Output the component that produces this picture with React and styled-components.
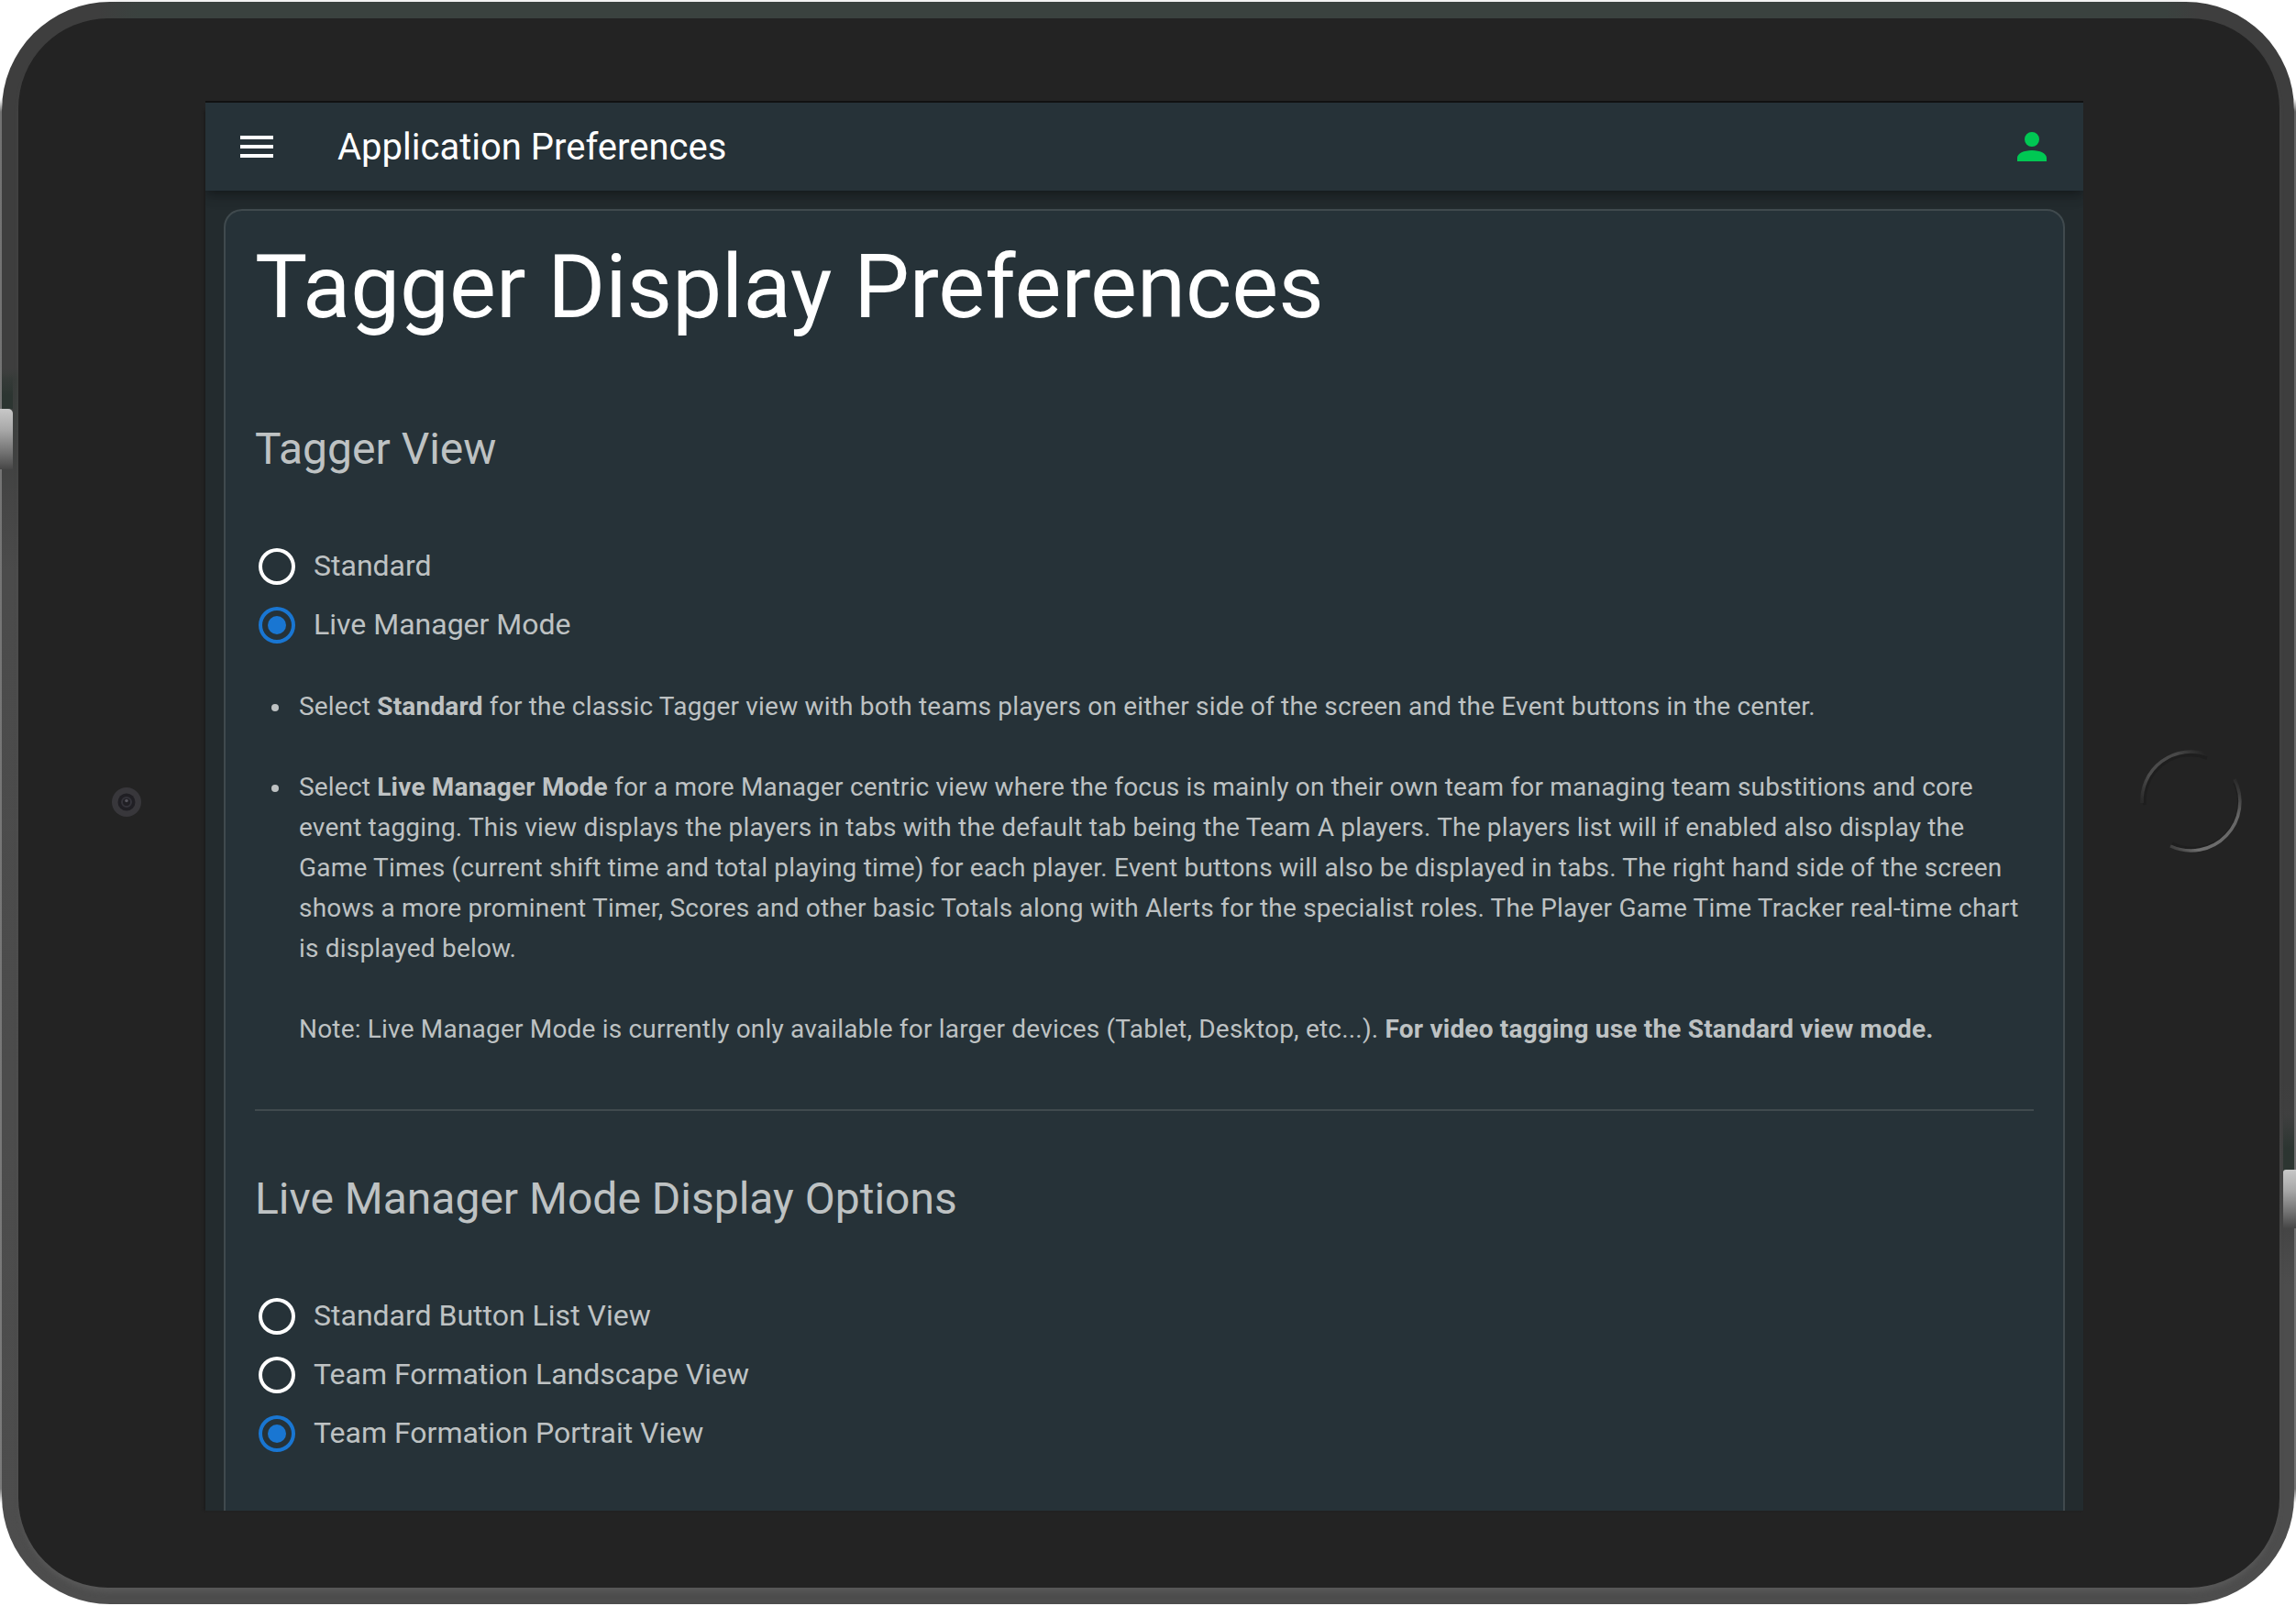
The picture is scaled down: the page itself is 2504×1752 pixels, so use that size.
import React from "react";
import styled, { createGlobalStyle, css } from "styled-components";

const Global = createGlobalStyle`
  *, *::before, *::after { box-sizing: border-box; }
  body { margin: 0; background: #fff; font-family: Roboto, "Liberation Sans", sans-serif; }
`;

const Device = styled.div`
  position: relative;
  width: 2504px;
  height: 1752px;
  padding: 2px;
  overflow: hidden;
  background:
    linear-gradient(to bottom, transparent 108px, #727272 122px, #7a7a7a 1624px, transparent 1640px) left / 2px 100% no-repeat,
    linear-gradient(to bottom, transparent 108px, #626262 122px, #727272 1624px, transparent 1640px) right / 2px 100% no-repeat,
    linear-gradient(to right, transparent 110px, #f3f3f3 130px, #f3f3f3 2374px, transparent 2394px) top / 100% 2px no-repeat,
    #fff;
`;

const Rim = styled.div`
  width: 2500px;
  height: 1748px;
  padding: 18px 16px 18px 18px;
  border-radius: 118px;
  background:
    linear-gradient(to right, transparent 105px, #3a423f 150px, #3a423f 2360px, transparent 2395px) top / 100% 18px no-repeat,
    linear-gradient(to bottom, #3e3e3e 400px, #383c3a 412px, #454545 540px, #4b4b4b 620px, #4d4d4d) left / 50% 100% no-repeat,
    linear-gradient(to bottom, #3e3e3e 1180px, #454545 1340px, #4d4d4d 1400px) right / 50% 100% no-repeat;
`;

const Bezel = styled.div`
  display: grid;
  grid-template-columns: 204px 2048px 214px;
  height: 1712px;
  padding: 92px 0 84px;
  border-radius: 98px;
  background: #232323;
  box-shadow: 0 7px 6px -3px #5a5a5a;
`;

const BezelSide = styled.div`
  display: flex;
  align-items: center;
  padding: ${(p) => p.$pad};
`;

const SideButton = styled.div`
  position: absolute;
  width: 14px;
  height: ${(p) => p.$height};
  top: ${(p) => p.$top};
  ${(p) =>
    p.$right
      ? css`
          right: 0;
          border-radius: 3px 0 0 0;
        `
      : css`
          left: 0;
          border-radius: 0 5px 0 0;
        `}
  background: linear-gradient(to bottom, #c8c8c8, #a8a8a8 35%, #6e6e6e 75%, #464646);
`;

const ButtonShade = styled.div`
  position: absolute;
  width: 12px;
  height: ${(p) => p.$height};
  top: ${(p) => p.$top};
  ${(p) => (p.$right ? "right: 2px;" : "left: 2px;")}
  background: linear-gradient(to bottom, rgba(44, 53, 49, 0), #2c3531 60%);
`;

const ScreenWrap = styled.div`
  height: 1528px;
  box-shadow: -2px 8px 3px -1px #181818;
`;

const Screen = styled.main`
  display: flex;
  flex-direction: column;
  height: 1536px;
  background: #232b2e;
  box-shadow: 0 -2px 0 #111;
`;

const Toolbar = styled.header`
  position: relative;
  display: flex;
  flex: none;
  align-items: center;
  height: 96px;
  padding: 0 32px;
  background: #263238;
  box-shadow: 0 4px 8px -2px rgba(0, 0, 0, 0.2), 0 8px 10px rgba(0, 0, 0, 0.14), 0 2px 20px rgba(0, 0, 0, 0.12);
  clip-path: inset(0 0 -40px 0);
`;

const Icon = styled.svg`
  flex: none;
  width: 48px;
  height: 48px;
  fill: ${(p) => p.$color || "#fff"};
`;

const ToolbarTitle = styled.div`
  flex: 1;
  padding: 2px 0 0 64px;
  color: #fff;
  font-size: 40px;
  line-height: 60px;
`;

const Content = styled.div`
  flex: 1;
  min-height: 0;
  padding: 20px 20px 0;
  overflow: hidden;
`;

const Card = styled.section`
  height: 1600px;
  padding: 34px 32px;
  border: 2px solid #404a4e;
  border-radius: 20px;
  background: #263238;
  color: #bec2c3;
`;

const PageTitle = styled.h1`
  margin: 0;
  color: #fff;
  font-size: 96px;
  font-weight: 400;
  line-height: 98px;
`;

const SectionTitle = styled.h2`
  margin: ${(p) => p.$top} 0 64px;
  font-size: 48px;
  font-weight: 400;
  line-height: 64px;
`;

const Option = styled.label`
  display: flex;
  align-items: center;
  gap: 16px;
  height: 64px;
  font-size: 32px;
  line-height: 62px;
`;

const OptionText = styled.span`
  height: 64px;
`;

const Notes = styled.ul`
  margin: 35px 0 0;
  padding: 0 0 0 48px;
  font-size: 28px;
  line-height: 44px;
  letter-spacing: 0.192px;
  list-style: none;
`;

const Note = styled.li`
  & + & {
    margin-top: 44px;
  }

  &::before {
    content: "";
    display: inline-block;
    width: 8px;
    height: 8px;
    margin: 0 22px 0 -30px;
    border-radius: 50%;
    background: currentColor;
    vertical-align: 4px;
  }
`;

const Paragraph = styled.p`
  margin: 44px 0 0;
`;

const Divider = styled.hr`
  height: 2px;
  margin: 65px 0 0;
  border: 0;
  background: #404a4e;
`;

function Radio({ checked, children }) {
  return (
    <Option>
      <Icon viewBox="0 0 24 24" $color={checked ? "#1976d2" : "#fff"}>
        <path d="M12 20a8 8 0 1 1 0-16 8 8 0 0 1 0 16m0-18a10 10 0 1 0 0 20 10 10 0 0 0 0-20" />
        {checked && <circle cx="12" cy="12" r="5" />}
      </Icon>
      <OptionText>{children}</OptionText>
    </Option>
  );
}

function Camera() {
  return (
    <svg width="36" height="36" viewBox="0 0 36 36">
      <circle cx="18" cy="18" r="16" fill="#38373b" />
      <circle cx="18" cy="18" r="9.5" fill="#201f24" />
      <circle cx="18" cy="18" r="5" fill="none" stroke="#34333a" strokeWidth="2" />
      <circle cx="18" cy="16.5" r="1.8" fill="#55545c" />
    </svg>
  );
}

function HomeButton() {
  return (
    <svg width="120" height="120" viewBox="0 0 120 120" fill="none" strokeWidth="3.5">
      <defs>
        <linearGradient id="homeUpper" gradientUnits="userSpaceOnUse" x1="4" y1="56" x2="76" y2="8">
          <stop offset="0" stopColor="#2a2a2a" />
          <stop offset="0.25" stopColor="#4c4c4c" />
          <stop offset="0.7" stopColor="#484848" />
          <stop offset="1" stopColor="#232323" />
        </linearGradient>
        <linearGradient id="homeLower" gradientUnits="userSpaceOnUse" x1="108" y1="36" x2="36" y2="110">
          <stop offset="0" stopColor="#2a2a2a" />
          <stop offset="0.25" stopColor="#666" />
          <stop offset="0.8" stopColor="#6e6e6e" />
          <stop offset="1" stopColor="#3a3a3a" />
        </linearGradient>
      </defs>
      <path d="M10 64A50 50 0 0 1 78 13" stroke="#1e1e1e" />
      <path d="M108 40A50 50 0 0 1 40 106" stroke="#1e1e1e" />
      <path d="M7 62A53.5 53.5 0 0 1 78 9" stroke="url(#homeUpper)" />
      <path d="M108 36A53.5 53.5 0 0 1 38 109" stroke="url(#homeLower)" />
    </svg>
  );
}

export default function App() {
  return (
    <>
      <Global />
      <Device>
        <Rim>
          <Bezel>
            <BezelSide $pad="0 0 11px 100px">
              <Camera />
            </BezelSide>
            <ScreenWrap>
              <Screen>
                <Toolbar>
                  <Icon viewBox="0 0 24 24">
                    <path d="M3 6h18v2H3V6m0 5h18v2H3v-2m0 5h18v2H3v-2Z" />
                  </Icon>
                  <ToolbarTitle>Application Preferences</ToolbarTitle>
                  <Icon viewBox="0 0 24 24" $color="#00c853">
                    <path d="M12 4a4 4 0 0 1 4 4 4 4 0 0 1-4 4 4 4 0 0 1-4-4 4 4 0 0 1 4-4m0 10c4.42 0 8 1.79 8 4v2H4v-2c0-2.21 3.58-4 8-4Z" />
                  </Icon>
                </Toolbar>
                <Content>
                  <Card>
                    <PageTitle>Tagger Display Preferences</PageTitle>
                    <SectionTitle $top="96px">Tagger View</SectionTitle>
                    <Radio>Standard</Radio>
                    <Radio checked>Live Manager Mode</Radio>
                    <Notes>
                      <Note>
                        Select <b>Standard</b> for the classic Tagger view with both teams players on either side of the
                        screen and the Event buttons in the center.
                      </Note>
                      <Note>
                        Select <b>Live Manager Mode</b> for a more Manager centric view where the focus is mainly on
                        their own team for managing team substitions and core event tagging. This view displays the
                        players in tabs with the default tab being the Team A players. The players list will if enabled
                        also display the Game Times (current shift time and total playing time) for each player. Event
                        buttons will also be displayed in tabs. The right hand side of the screen shows a more prominent
                        Timer, Scores and other basic Totals along with Alerts for the specialist roles. The Player Game
                        Time Tracker real-time chart is displayed below.
                        <Paragraph>
                          Note: Live Manager Mode is currently only available for larger devices (Tablet, Desktop,
                          etc...). <b>For video tagging use the Standard view mode.</b>
                        </Paragraph>
                      </Note>
                    </Notes>
                    <Divider />
                    <SectionTitle $top="64px">Live Manager Mode Display Options</SectionTitle>
                    <Radio>Standard Button List View</Radio>
                    <Radio>Team Formation Landscape View</Radio>
                    <Radio checked>Team Formation Portrait View</Radio>
                  </Card>
                </Content>
              </Screen>
            </ScreenWrap>
            <BezelSide $pad="0 0 12px 56.5px">
              <HomeButton />
            </BezelSide>
          </Bezel>
        </Rim>
        <ButtonShade $top="408px" $height="38px" />
        <SideButton $top="446px" $height="66px" />
        <ButtonShade $right $top="1216px" $height="61px" />
        <SideButton $right $top="1276px" $height="64px" />
      </Device>
    </>
  );
}
